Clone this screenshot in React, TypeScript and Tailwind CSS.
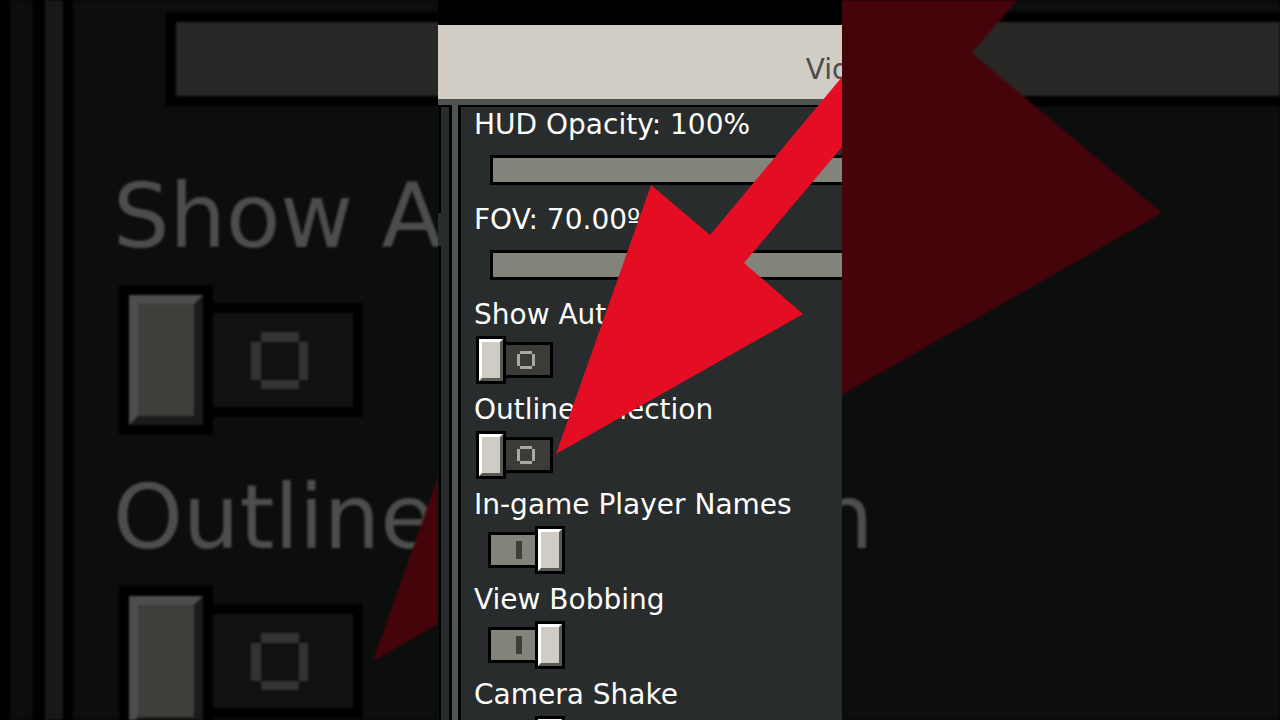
import { useId, useState } from "react";
import { clsx } from "clsx";

type Size = "sm" | "lg";

type SettingProps = {
  label: string;
  size?: Size;
};

function Label({ htmlFor, size, children }: { htmlFor: string; size: Size; children: string }) {
  return (
    <label
      htmlFor={htmlFor}
      className={clsx(
        "whitespace-nowrap text-[#fdfdfb]",
        size === "sm" ? "text-[28px] leading-[32px]" : "text-[89px] leading-[101px]",
      )}
    >
      {children}
    </label>
  );
}

function Slider({ id, size = "sm", label }: { id?: string; size?: Size; label?: string }) {
  return (
    <input
      id={id}
      type="range"
      aria-label={label}
      defaultValue={100}
      className={clsx(
        "block min-w-0 flex-1 appearance-none border-r-0 border-black bg-[#82837a] [&::-webkit-slider-thumb]:opacity-0",
        size === "sm" ? "ml-4 h-[30px] border-[3px]" : "ml-[53px] h-[94px] border-[10px]",
      )}
    />
  );
}

function SliderSetting({ label }: SettingProps) {
  const id = useId();
  return (
    <div className="flex h-[95px] shrink-0 flex-col gap-[5px]">
      <Label htmlFor={id} size="sm">{label}</Label>
      <div className="flex h-12 items-center">
        <Slider id={id} />
      </div>
    </div>
  );
}

function Knob({ size }: { size: Size }) {
  return (
    <span
      className={clsx(
        "flex border-black",
        size === "sm" ? "h-12 w-[30px] border-[3px]" : "h-[150px] w-[94px] border-[10px]",
      )}
    >
      <span
        className={clsx(
          "flex-1 border-t-white border-r-[#5a5954] border-b-[#5a5954] border-l-white bg-[#d0ccc4]",
          size === "sm" ? "border-[3px]" : "border-[9px]",
        )}
      />
    </span>
  );
}

function Track({ size, on }: { size: Size; on: boolean }) {
  return (
    <span
      className={clsx(
        "flex items-center justify-center border-black",
        size === "sm" ? "h-9 w-[47px] border-y-[3px]" : "h-[114px] w-[150px] border-y-[10px]",
        size === "sm" && (on ? "border-l-[3px]" : "border-r-[3px] pr-1"),
        size === "lg" && (on ? "border-l-[10px]" : "border-r-[10px] pr-2"),
        on ? "bg-[#82837b]" : "bg-[#3b3c37]",
      )}
    >
      <svg viewBox="0 0 6 6" shapeRendering="crispEdges" className={size === "sm" ? "size-[18px]" : "size-[57px]"}>
        {on ? (
          <path d="M4 0h2v6h-2z" fill="#3d3e38" />
        ) : (
          <path d="M1 0h4v1h-4z M1 5h4v1h-4z M0 1h1v4h-1z M5 1h1v4h-1z" fill="#a8a9a5" />
        )}
      </svg>
    </span>
  );
}

function ToggleSetting({ label, size = "sm", defaultOn = false }: SettingProps & { defaultOn?: boolean }) {
  const id = useId();
  const [on, setOn] = useState(defaultOn);
  return (
    <div className={clsx("flex shrink-0 flex-col", size === "sm" ? "h-[95px] gap-[5px]" : "h-[301px] gap-[18px]")}>
      <Label htmlFor={id} size={size}>{label}</Label>
      <label
        htmlFor={id}
        className={clsx(
          "relative flex items-center self-start",
          on ? "flex-row-reverse" : "flex-row",
          size === "sm" && (on ? "ml-[14px]" : "ml-[2px]"),
          size === "lg" && "ml-[6px]",
        )}
      >
        <input id={id} type="checkbox" checked={on} onChange={(e) => setOn(e.target.checked)} className="sr-only" />
        <Knob size={size} />
        <Track size={size} on={on} />
      </label>
    </div>
  );
}

function Arrow() {
  return (
    <svg
      viewBox="0 0 1280 720"
      preserveAspectRatio="xMidYMid slice"
      className="pointer-events-none absolute inset-0 h-full w-full"
    >
      <path d="M373 661 L674 -191 L861 -32 L1280 -532 V-310 L972 53 L1162 213 Z" fill="#e50d24" />
    </svg>
  );
}

function Backdrop() {
  return (
    <div className="relative flex min-w-0 overflow-hidden bg-[#292c2d] opacity-30 blur-[1px] [grid-area:1/1]">
      <div className="w-[10px] shrink-0 bg-black" />
      <div className="w-[23px] shrink-0" />
      <div className="w-10 shrink-0 border-r-[10px] border-l-[12px] border-black bg-[#505151]" />
      <div className="flex min-w-0 flex-1 flex-col pt-3 pl-10">
        <div className="flex pb-[60px]">
          <Slider size="lg" label="FOV" />
        </div>
        <ToggleSetting size="lg" label="Show A" />
        <ToggleSetting size="lg" label="Outline Selection" />
      </div>
      <Arrow />
    </div>
  );
}

function SidebarEdge() {
  return (
    <div className="flex w-[14px] shrink-0 flex-col gap-[33px] border-t-2 border-r-[3px] border-black">
      <div className="h-[106px] w-[3px] shrink-0 border-r-2 border-b-2 border-black bg-[#0b0d0e]" />
      <div className="w-[3px] flex-1 border-t-2 border-r-2 border-black bg-[#0b0d0e]" />
    </div>
  );
}

function VideoSettings() {
  return (
    <main className="relative flex aspect-[101/180] h-screen flex-col justify-self-center overflow-hidden bg-[#292c2d] [grid-area:1/1]">
      <div className="h-[25px] shrink-0 bg-black" />
      <header className="flex h-20 shrink-0 items-center border-b-[6px] border-[#505151] bg-[#d1cdc5] pt-4 pl-[91%]">
        <h1 className="text-[28px] leading-[32px] whitespace-nowrap text-[#4c4c4a]">Vid</h1>
      </header>
      <div className="flex min-h-0 flex-1">
        <SidebarEdge />
        <div className="w-[6px] shrink-0 bg-[#505354]" />
        <section className="flex min-w-0 flex-1 flex-col border-t-2 border-l-[3px] border-black pt-[2px] pl-[13px]">
          <SliderSetting label="HUD Opacity: 100%" />
          <SliderSetting label="FOV: 70.00º" />
          <ToggleSetting label="Show Aut" />
          <ToggleSetting label="Outline Selection" />
          <ToggleSetting label="In-game Player Names" defaultOn />
          <ToggleSetting label="View Bobbing" defaultOn />
          <ToggleSetting label="Camera Shake" defaultOn />
        </section>
      </div>
      <svg
        viewBox="0 0 404 720"
        preserveAspectRatio="xMidYMid slice"
        className="pointer-events-none absolute inset-0 h-full w-full"
      >
        <path d="M118 454 L213 185 L272 235 L404 77 V147 L306 263 L365 314 Z" fill="#e50d24" />
      </svg>
    </main>
  );
}

export default function App() {
  return (
    <div className="grid h-screen grid-cols-1 grid-rows-1 overflow-hidden bg-black font-['DejaVu_Sans',sans-serif]">
      <Backdrop />
      <VideoSettings />
    </div>
  );
}
